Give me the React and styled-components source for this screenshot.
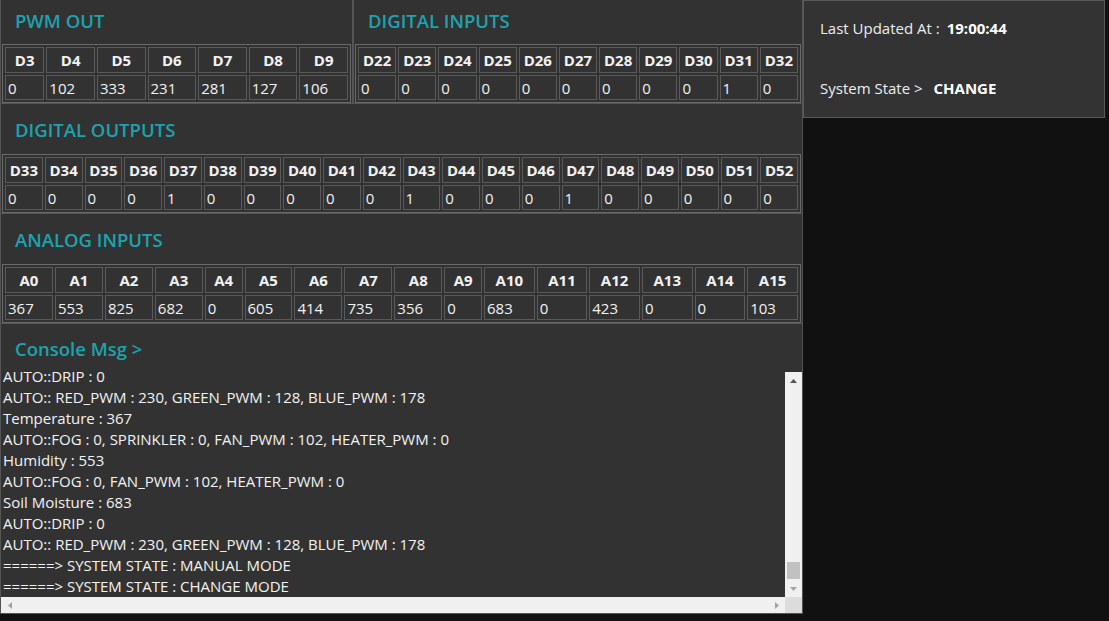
import React from 'react'
import styled, { createGlobalStyle } from 'styled-components'

const GlobalStyle = createGlobalStyle`
  *, *::before, *::after {
    box-sizing: border-box;
  }
  html, body {
    margin: 0;
    padding: 0;
    background: #111111;
  }
  body {
    font-family: 'Open Sans', 'Noto Sans', sans-serif;
    font-size: 15px;
    color: #f0f0f0;
  }
`

const Page = styled.div`
  display: flex;
  align-items: flex-start;
`

const Main = styled.div`
  width: 803px;
  display: flex;
  flex-direction: column;
  background: #323232;
`

const Row = styled.div`
  display: flex;
`

const Panel = styled.section`
  flex: ${p => (p.width ? `0 0 ${p.width}px` : '1 1 auto')};
  min-width: 0;
  background: #323232;
  border-left: 1px solid #555;
  border-right: 1px solid #555;
  border-bottom: 1px solid #555;
  padding: 0 1px;
`

const Title = styled.h2`
  margin: 0;
  height: ${p => p.h || 50}px;
  display: flex;
  align-items: center;
  padding: 0 0 ${p => p.lift || 0}px 13px;
  font-size: 18.5px;
  font-weight: 600;
  color: #1ca3ae;
`

const Table = styled.table`
  width: 100%;
  border-collapse: separate;
  border-spacing: 2px;
  border: 1px solid #6a6a6a;
  color: #f2f2f2;
`

const HeadCell = styled.th`
  height: 26px;
  padding: 0 2px;
  border: 1px solid #5a5a5a;
  font-weight: 700;
  font-size: 15px;
  text-align: center;
  white-space: nowrap;
`

const DataCell = styled.td`
  height: 25px;
  padding: 0 2px;
  border: 1px solid #5a5a5a;
  font-size: 15px;
  text-align: left;
`

const Side = styled.aside`
  width: 302px;
  height: 118px;
  background: #333333;
  border: 1px solid #5a5a5a;
  padding: 17px 0 0 16px;
  display: flex;
  flex-direction: column;
  gap: 39px;
  font-size: 15px;
  color: #eeeeee;
`

const Info = styled.div`
  line-height: 21px;
  b {
    margin-left: 7px;
    font-weight: 700;
    color: #ffffff;
  }
`

const Console = styled.div`
  display: grid;
  grid-template-columns: 1fr 17px;
  grid-template-rows: 225px 16px;
  margin: 0 -1px;
`

const ConsoleText = styled.div`
  display: flex;
  flex-direction: column;
  justify-content: flex-end;
  overflow: hidden;
  padding-left: 2px;
  line-height: 21px;
  font-size: 15px;
  color: #f2f2f2;
  white-space: nowrap;
`

const VBar = styled.div`
  background: #f0f0f0;
  display: flex;
  flex-direction: column;
  align-items: center;
`

const HBar = styled.div`
  background: #f0f0f0;
  display: flex;
  align-items: center;
  justify-content: space-between;
`

const Corner = styled.div`
  background: #dcdcdc;
`

const ArrowBtn = styled.div`
  width: 17px;
  height: 17px;
  display: flex;
  align-items: center;
  justify-content: center;
  flex: 0 0 auto;
`

const Track = styled.div`
  flex: 1;
  width: 100%;
  display: flex;
  flex-direction: column;
  justify-content: flex-end;
  align-items: center;
`

const Thumb = styled.div`
  width: 13px;
  height: 17px;
  background: #c1c1c1;
  margin-bottom: 1px;
`

const Arrow = ({ dir, color }) => {
  const pts = {
    up: '0,4 3.5,0 7,4',
    down: '0,0 3.5,4 7,0',
    left: '4,0 0,3.5 4,7',
    right: '0,0 4,3.5 0,7',
  }[dir]
  const vertical = dir === 'up' || dir === 'down'
  return (
    <svg width={vertical ? 7 : 4} height={vertical ? 4 : 7}>
      <polygon points={pts} fill={color} />
    </svg>
  )
}

const pwm = [['D3', 0], ['D4', 102], ['D5', 333], ['D6', 231], ['D7', 281], ['D8', 127], ['D9', 106]]
const dIn = [22, 23, 24, 25, 26, 27, 28, 29, 30, 31, 32].map(n => [`D${n}`, n === 31 ? 1 : 0])
const dOut = Array.from({ length: 20 }, (_, i) => 33 + i).map(n => [`D${n}`, [37, 43, 47].includes(n) ? 1 : 0])
const analog = [367, 553, 825, 682, 0, 605, 414, 735, 356, 0, 683, 0, 423, 0, 0, 103].map((v, i) => [`A${i}`, v])

const lines = [
  'Humidity : 553',
  'AUTO::FOG : 0, FAN_PWM : 102, HEATER_PWM : 0',
  'Soil Moisture : 683',
  'AUTO::DRIP : 0',
  'AUTO:: RED_PWM : 230, GREEN_PWM : 128, BLUE_PWM : 178',
  'Temperature : 367',
  'AUTO::FOG : 0, SPRINKLER : 0, FAN_PWM : 102, HEATER_PWM : 0',
  'Humidity : 553',
  'AUTO::FOG : 0, FAN_PWM : 102, HEATER_PWM : 0',
  'Soil Moisture : 683',
  'AUTO::DRIP : 0',
  'AUTO:: RED_PWM : 230, GREEN_PWM : 128, BLUE_PWM : 178',
  '======> SYSTEM STATE : MANUAL MODE',
  '======> SYSTEM STATE : CHANGE MODE',
]

const PinTable = ({ pins }) => (
  <Table>
    <tbody>
      <tr>
        {pins.map(([name]) => <HeadCell key={name}>{name}</HeadCell>)}
      </tr>
      <tr>
        {pins.map(([name, v]) => <DataCell key={name}>{v}</DataCell>)}
      </tr>
    </tbody>
  </Table>
)

export default function App() {
  return (
    <>
      <GlobalStyle />
      <Page>
        <Main>
          <Row>
            <Panel width={353}>
              <Title h={44} lift={3}>PWM OUT</Title>
              <PinTable pins={pwm} />
            </Panel>
            <Panel>
              <Title h={44} lift={3}>DIGITAL INPUTS</Title>
              <PinTable pins={dIn} />
            </Panel>
          </Row>
          <Panel>
            <Title>DIGITAL OUTPUTS</Title>
            <PinTable pins={dOut} />
          </Panel>
          <Panel>
            <Title>ANALOG INPUTS</Title>
            <PinTable pins={analog} />
          </Panel>
          <Panel>
            <Title h={48}>Console Msg &gt;</Title>
            <Console>
              <ConsoleText>
                {lines.map((l, i) => <div key={i}>{l}</div>)}
              </ConsoleText>
              <VBar>
                <ArrowBtn><Arrow dir="up" color="#505050" /></ArrowBtn>
                <Track><Thumb /></Track>
                <ArrowBtn><Arrow dir="down" color="#a3a3a3" /></ArrowBtn>
              </VBar>
              <HBar>
                <ArrowBtn><Arrow dir="left" color="#a3a3a3" /></ArrowBtn>
                <ArrowBtn><Arrow dir="right" color="#a3a3a3" /></ArrowBtn>
              </HBar>
              <Corner />
            </Console>
          </Panel>
        </Main>
        <Side>
          <Info>Last Updated At :<b>19:00:44</b></Info>
          <Info>System State &gt; <b>CHANGE</b></Info>
        </Side>
      </Page>
    </>
  )
}
